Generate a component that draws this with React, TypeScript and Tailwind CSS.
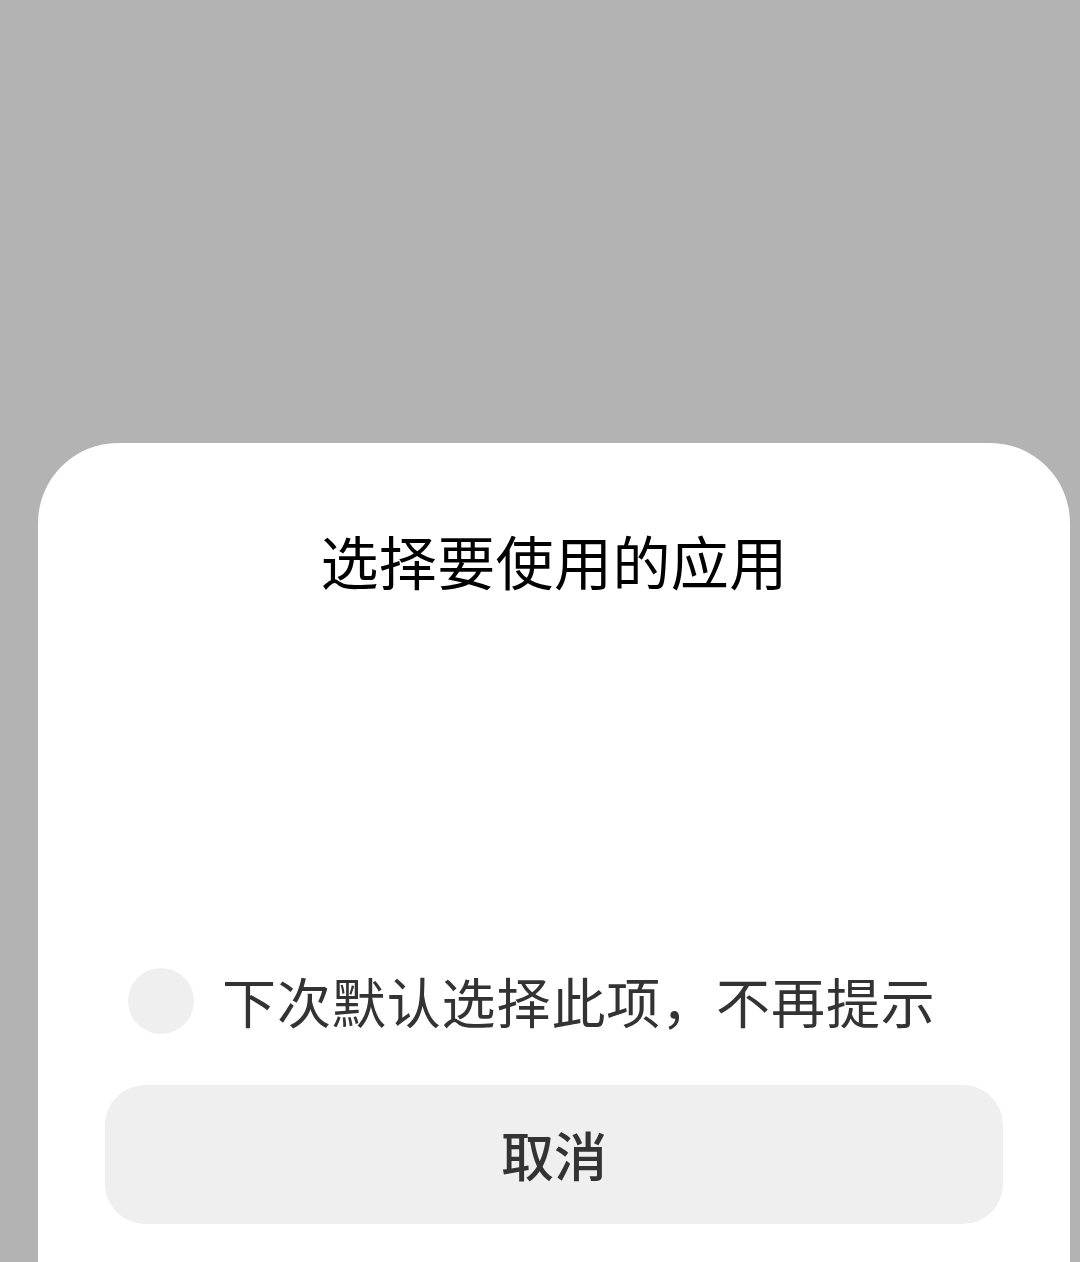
export default function App() {
  return (
    <div
      className="h-[1262px] w-[1080px] bg-[#b3b3b3] overflow-hidden flex flex-col"
      style={{ fontFamily: '"Noto Sans CJK SC", "Noto Sans", sans-serif' }}
    >
      <div className="h-[443px] shrink-0" />
      <div className="ml-[38px] w-[1032px] h-[900px] shrink-0 bg-white rounded-[80px] flex flex-col">
        <div className="pt-[77px] h-[80px] box-content text-center text-[58px] leading-[80px] text-black font-normal tracking-[0.4px]">
          选择要使用的应用
        </div>
        <div className="mt-[368px] flex items-center pl-[90px] h-[66px]">
          <div className="w-[66px] h-[66px] rounded-full bg-[#efefef] shrink-0" />
          <span className="ml-[28px] text-[54px] leading-[66px] text-[#333333] tracking-[0.9px]">
            下次默认选择此项，不再提示
          </span>
        </div>
        <div className="mt-[51px] mx-[67px] h-[139px] rounded-[40px] bg-[#efefef] flex items-center justify-center">
          <span className="text-[53px] text-[#333333] font-medium leading-none">取消</span>
        </div>
      </div>
    </div>
  );
}
